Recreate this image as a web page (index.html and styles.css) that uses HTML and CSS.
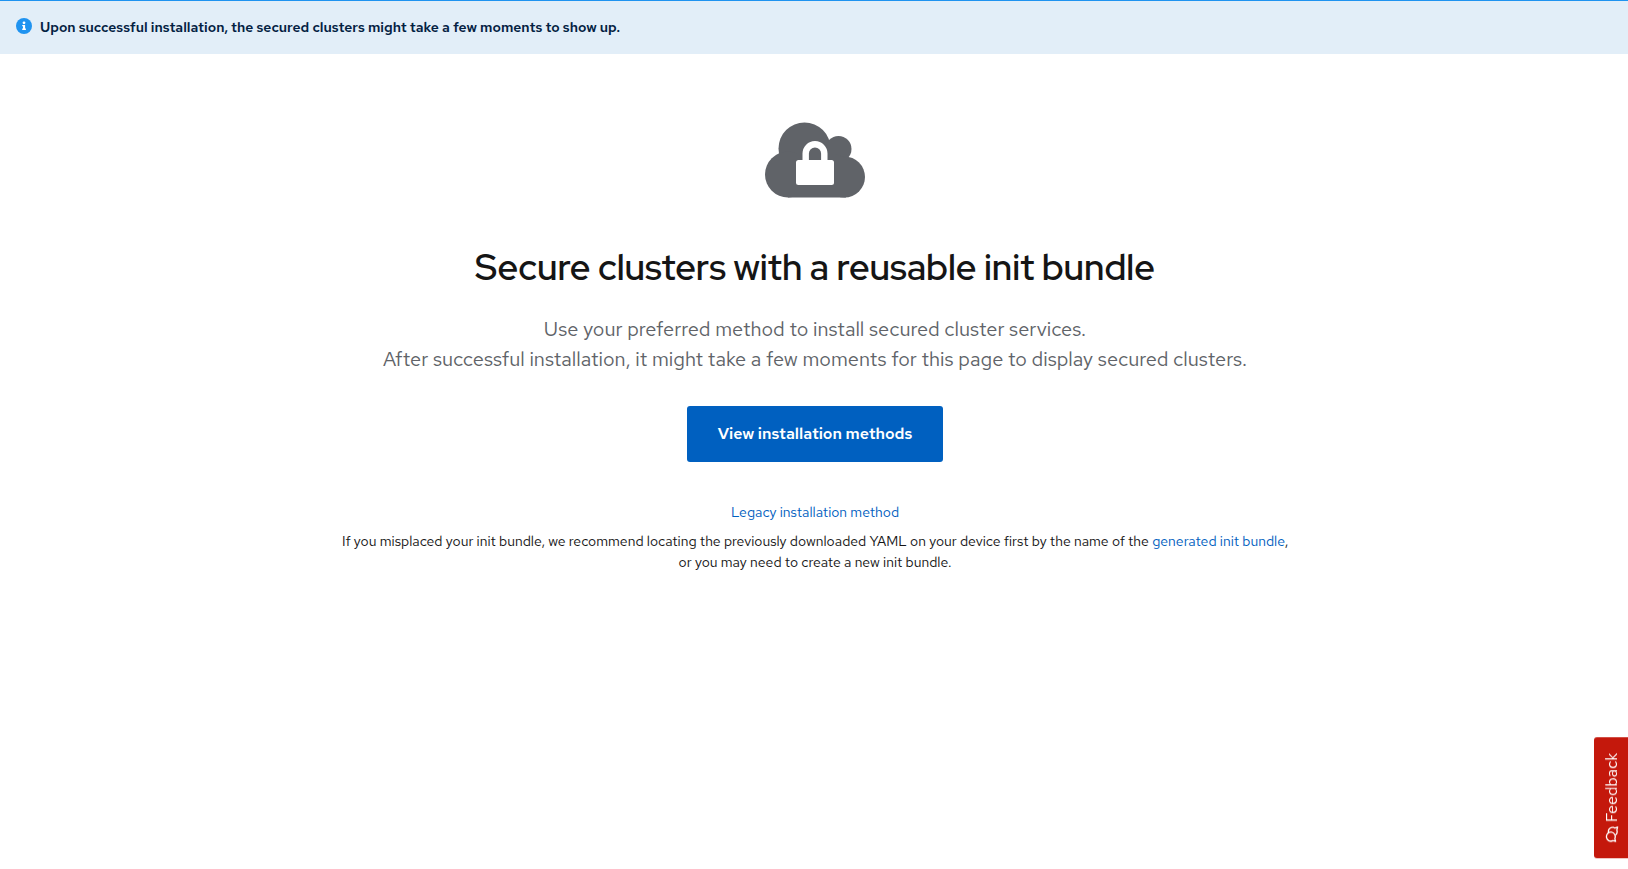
FILE: index.html
```html
<!DOCTYPE html>
<html lang="en">
<head>
<meta charset="utf-8">
<meta name="viewport" content="width=device-width, initial-scale=1">
<title>Secure clusters</title>
<link rel="stylesheet" href="styles.css">
</head>
<body>
<div class="alert" role="status">
  <svg class="alert-icon" viewBox="0 0 16 16" aria-hidden="true">
    <circle cx="8" cy="8" r="8" fill="#1f93f0"/>
    <circle cx="8" cy="4.8" r="1.4" fill="#fff"/>
    <path d="M6.2 6.9h2.9v3.7h.8v1.3H6.2v-1.3H7V8.2h-.8z" fill="#fff"/>
  </svg>
  <h4 class="alert-title">Upon successful installation, the secured clusters might take a few moments to show up.</h4>
</div>
<main class="empty-state">
  <svg class="cloud" viewBox="0 0 100 76" aria-hidden="true">
    <g fill="#606368">
      <circle cx="39.5" cy="26.5" r="26"/>
      <circle cx="73.5" cy="27" r="13"/>
      <circle cx="23" cy="52.5" r="23"/>
      <circle cx="79.5" cy="55" r="20.5"/>
      <path d="M23 32H70L81 36V75.5H23z"/>
    </g>
    <rect x="31" y="38" width="38" height="25" rx="2.5" fill="#fff"/>
    <path d="M40.7 40V31.5a9.3 9.3 0 0 1 18.6 0V40" fill="none" stroke="#fff" stroke-width="6.4"/>
  </svg>
  <h1 class="title">Secure clusters with a reusable init bundle</h1>
  <p class="lead">Use your preferred method to install secured cluster services.<br>After successful installation, it might take a few moments for this page to display secured clusters.</p>
  <button class="primary" type="button">View installation methods</button>
  <a class="link legacy" href="#">Legacy installation method</a>
  <p class="note">If you misplaced your init bundle, we recommend locating the previously downloaded YAML on your device first by the name of the <a class="link" href="#">generated init bundle</a>,<br>or you may need to create a new init bundle.</p>
</main>
<button class="feedback" type="button">
  <svg class="feedback-icon" viewBox="0 0 16 16" fill="none" stroke="#fff" stroke-width="1.3" stroke-linejoin="round" aria-hidden="true">
    <path d="M1.6 9 .8 11.6l2.8-.8A4.6 4.4 0 1 0 1.6 9z"/>
    <path d="M9.6 4.6a4 4 0 0 1 4.6 6l1 3-3-.8a4.4 4 0 0 1-5.2-1.4"/>
  </svg>
  Feedback
</button>
</body>
</html>
```
FILE: styles.css
```css
* { box-sizing: border-box; }
body {
  margin: 0;
  background: #fff;
  color: #151515;
  font-family: "Red Hat Text", Roboto, "Liberation Sans", sans-serif;
  font-size: 14px;
  line-height: 21px;
}
h1, h4, p { margin: 0; }
.alert {
  display: flex;
  gap: 8px;
  padding: 16px;
  border-top: 1px solid #1f93f0;
  background: #e2eef8;
  color: #032142;
}
.alert-icon { width: 16px; height: 16px; margin-top: 1px; flex: none; }
.alert-title { font-size: 14px; font-weight: 600; line-height: 21px; }
.empty-state {
  display: flex;
  flex-direction: column;
  align-items: center;
  padding: 68px 32px 32px 34px;
  text-align: center;
}
.cloud { width: 100px; height: 76px; }
.title {
  margin-top: 46px;
  font-family: "Red Hat Display", "Red Hat Text", Roboto, sans-serif;
  font-size: 36px;
  font-weight: 600;
  line-height: 47px;
}
.lead {
  margin-top: 23px;
  color: #606368;
  font-size: 20px;
  line-height: 30px;
}
.primary {
  margin-top: 32px;
  padding: 16px 31px;
  border: 0;
  border-radius: 3px;
  background: #0060c0;
  color: #fff;
  font: 600 16px/24px "Red Hat Text", Roboto, sans-serif;
}
.link { color: #0060c0; text-decoration: none; }
.legacy { margin-top: 40px; }
.note { margin-top: 8px; }
.feedback {
  position: fixed;
  right: 0;
  bottom: 11px;
  display: flex;
  align-items: center;
  gap: 4px;
  padding: 16px 10px 16px 8px;
  border: 0;
  border-radius: 0 3px 3px 0;
  background: #c4180c;
  color: #fff;
  font: 400 16px/16px "Red Hat Text", Roboto, sans-serif;
  writing-mode: vertical-rl;
  transform: rotate(180deg);
}
.feedback-icon { width: 16px; height: 16px; transform: rotate(90deg); }
```
